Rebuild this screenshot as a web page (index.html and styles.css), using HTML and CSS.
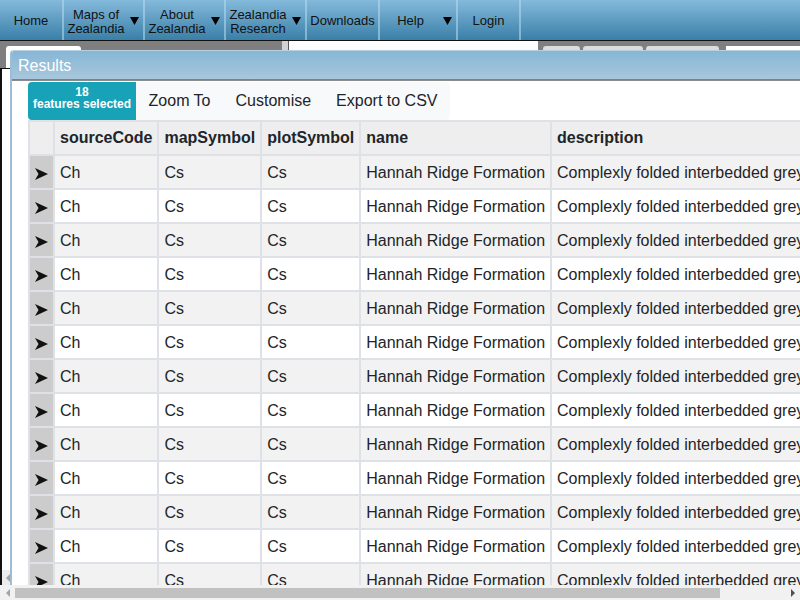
FILE: index.html
```html
<!DOCTYPE html>
<html>
<head>
<meta charset="utf-8">
<link rel="stylesheet" href="styles.css">
</head>
<body>
<div class="viewport">
<div class="page">
  <nav class="topnav">
    <div class="nav-item w-home">Home</div>
    <div class="nav-item dd w-79"><span class="label two">Maps of<br>Zealandia</span><span class="caret"><svg width="9" height="8" viewBox="0 0 9 8"><polygon points="0,0 9,0 4.5,8" fill="#000"/></svg></span></div>
    <div class="nav-item dd w-79"><span class="label two">About<br>Zealandia</span><span class="caret"><svg width="9" height="8" viewBox="0 0 9 8"><polygon points="0,0 9,0 4.5,8" fill="#000"/></svg></span></div>
    <div class="nav-item dd w-79"><span class="label two">Zealandia<br>Research</span><span class="caret"><svg width="9" height="8" viewBox="0 0 9 8"><polygon points="0,0 9,0 4.5,8" fill="#000"/></svg></span></div>
    <div class="nav-item w-dl">Downloads</div>
    <div class="nav-item dd w-help"><span class="label">Help</span><span class="caret"><svg width="9" height="8" viewBox="0 0 9 8"><polygon points="0,0 9,0 4.5,8" fill="#000"/></svg></span></div>
    <div class="nav-item w-login">Login</div>
  </nav>
  <div class="toolstrip">
    <div class="strip-tab"></div>
    <div class="strip-grip"></div>
    <div class="strip-search"></div>
    <div class="strip-btn sb1"></div>
    <div class="strip-btn sb2"></div>
    <div class="strip-btn sb3"></div>
    <div class="strip-field"></div>
  </div>
  <div class="workspace">
    <div class="ws-scroll"><svg width="4" height="8" viewBox="0 0 4 8"><polygon points="4,0 4,8 0,4" fill="#a3a3a3"/></svg></div>
  </div>

  <section class="results">
    <div class="results-title">Results</div>
    <div class="results-body">
      <div class="toolbar">
        <div class="badge"><div>18</div><div>features selected</div></div>
        <div class="tb-btn">Zoom To</div>
        <div class="tb-btn">Customise</div>
        <div class="tb-btn last">Export to CSV</div>
      </div>
      <table class="grid">
        <thead>
          <tr><th class="sel"></th><th class="c-src">sourceCode</th><th class="c-map">mapSymbol</th><th class="c-plot">plotSymbol</th><th>name</th><th>description</th></tr>
        </thead>
        <tbody>
          <tr><td class="sel"><svg class="arrow" width="13" height="12" viewBox="0 0 13 12"><polygon points="0,0 13,6 0,12 3.5,6" fill="#111"/></svg></td><td>Ch</td><td>Cs</td><td>Cs</td><td>Hannah Ridge Formation</td><td>Complexly folded interbedded greywacke and argillite</td></tr>
          <tr><td class="sel"><svg class="arrow" width="13" height="12" viewBox="0 0 13 12"><polygon points="0,0 13,6 0,12 3.5,6" fill="#111"/></svg></td><td>Ch</td><td>Cs</td><td>Cs</td><td>Hannah Ridge Formation</td><td>Complexly folded interbedded greywacke and argillite</td></tr>
          <tr><td class="sel"><svg class="arrow" width="13" height="12" viewBox="0 0 13 12"><polygon points="0,0 13,6 0,12 3.5,6" fill="#111"/></svg></td><td>Ch</td><td>Cs</td><td>Cs</td><td>Hannah Ridge Formation</td><td>Complexly folded interbedded greywacke and argillite</td></tr>
          <tr><td class="sel"><svg class="arrow" width="13" height="12" viewBox="0 0 13 12"><polygon points="0,0 13,6 0,12 3.5,6" fill="#111"/></svg></td><td>Ch</td><td>Cs</td><td>Cs</td><td>Hannah Ridge Formation</td><td>Complexly folded interbedded greywacke and argillite</td></tr>
          <tr><td class="sel"><svg class="arrow" width="13" height="12" viewBox="0 0 13 12"><polygon points="0,0 13,6 0,12 3.5,6" fill="#111"/></svg></td><td>Ch</td><td>Cs</td><td>Cs</td><td>Hannah Ridge Formation</td><td>Complexly folded interbedded greywacke and argillite</td></tr>
          <tr><td class="sel"><svg class="arrow" width="13" height="12" viewBox="0 0 13 12"><polygon points="0,0 13,6 0,12 3.5,6" fill="#111"/></svg></td><td>Ch</td><td>Cs</td><td>Cs</td><td>Hannah Ridge Formation</td><td>Complexly folded interbedded greywacke and argillite</td></tr>
          <tr><td class="sel"><svg class="arrow" width="13" height="12" viewBox="0 0 13 12"><polygon points="0,0 13,6 0,12 3.5,6" fill="#111"/></svg></td><td>Ch</td><td>Cs</td><td>Cs</td><td>Hannah Ridge Formation</td><td>Complexly folded interbedded greywacke and argillite</td></tr>
          <tr><td class="sel"><svg class="arrow" width="13" height="12" viewBox="0 0 13 12"><polygon points="0,0 13,6 0,12 3.5,6" fill="#111"/></svg></td><td>Ch</td><td>Cs</td><td>Cs</td><td>Hannah Ridge Formation</td><td>Complexly folded interbedded greywacke and argillite</td></tr>
          <tr><td class="sel"><svg class="arrow" width="13" height="12" viewBox="0 0 13 12"><polygon points="0,0 13,6 0,12 3.5,6" fill="#111"/></svg></td><td>Ch</td><td>Cs</td><td>Cs</td><td>Hannah Ridge Formation</td><td>Complexly folded interbedded greywacke and argillite</td></tr>
          <tr><td class="sel"><svg class="arrow" width="13" height="12" viewBox="0 0 13 12"><polygon points="0,0 13,6 0,12 3.5,6" fill="#111"/></svg></td><td>Ch</td><td>Cs</td><td>Cs</td><td>Hannah Ridge Formation</td><td>Complexly folded interbedded greywacke and argillite</td></tr>
          <tr><td class="sel"><svg class="arrow" width="13" height="12" viewBox="0 0 13 12"><polygon points="0,0 13,6 0,12 3.5,6" fill="#111"/></svg></td><td>Ch</td><td>Cs</td><td>Cs</td><td>Hannah Ridge Formation</td><td>Complexly folded interbedded greywacke and argillite</td></tr>
          <tr><td class="sel"><svg class="arrow" width="13" height="12" viewBox="0 0 13 12"><polygon points="0,0 13,6 0,12 3.5,6" fill="#111"/></svg></td><td>Ch</td><td>Cs</td><td>Cs</td><td>Hannah Ridge Formation</td><td>Complexly folded interbedded greywacke and argillite</td></tr>
          <tr><td class="sel"><svg class="arrow" width="13" height="12" viewBox="0 0 13 12"><polygon points="0,0 13,6 0,12 3.5,6" fill="#111"/></svg></td><td>Ch</td><td>Cs</td><td>Cs</td><td>Hannah Ridge Formation</td><td>Complexly folded interbedded greywacke and argillite</td></tr>
          <tr><td class="sel"><svg class="arrow" width="13" height="12" viewBox="0 0 13 12"><polygon points="0,0 13,6 0,12 3.5,6" fill="#111"/></svg></td><td>Ch</td><td>Cs</td><td>Cs</td><td>Hannah Ridge Formation</td><td>Complexly folded interbedded greywacke and argillite</td></tr>
        </tbody>
      </table>
    </div>
  </section>
</div>
<div class="hscroll">
  <div class="sb-arrow"><svg width="4" height="8" viewBox="0 0 4 8"><polygon points="4,0 4,8 0,4" fill="#a3a3a3"/></svg></div>
  <div class="sb-track"><div class="sb-thumb"></div></div>
  <div class="sb-arrow"><svg width="4" height="8" viewBox="0 0 4 8"><polygon points="0,0 4,4 0,8" fill="#505050"/></svg></div>
</div>
</div>
</body>
</html>
```
FILE: styles.css
```css
html, body {
  margin: 0;
  padding: 0;
}
body {
  font-family: "Liberation Sans", Arial, sans-serif;
  color: #212529;
  overflow: hidden;
}
.viewport {
  width: 800px;
  height: 600px;
  overflow: hidden;
}
.page {
  position: relative;
  width: 800px;
  height: 585px;
  overflow: hidden;
  background: #fff;
}

/* top navigation */
.topnav {
  display: flex;
  height: 40px;
  background: linear-gradient(#84badb, #3a7fa8);
  border-bottom: 1px solid #111;
  font-size: 13px;
  color: #111;
}
.nav-item {
  display: flex;
  align-items: center;
  justify-content: center;
  text-align: center;
  line-height: 14px;
  padding-top: 1px;
  border-right: 2px solid rgba(185, 218, 238, 0.55);
  box-sizing: border-box;
  flex-shrink: 0;
}
.nav-item.dd {
  justify-content: flex-start;
}
.nav-item .label {
  flex: 1;
  text-align: center;
}
.nav-item .label.two {
  padding-top: 2px;
}
.nav-item .caret {
  width: 15px;
  display: flex;
  justify-content: center;
  padding-right: 2px;
  box-sizing: border-box;
}
.nav-item .caret svg {
  display: block;
}
.w-home { width: 64px; }
.w-79 { width: 81px; }
.w-dl { width: 73px; }
.w-help { width: 78px; }
.w-login { width: 63px; }

/* underlying app strip */
.toolstrip {
  display: flex;
  align-items: flex-start;
  height: 27px;
  background: #7f7f7f;
  overflow: hidden;
}
.toolstrip > div {
  flex-shrink: 0;
}
.strip-tab {
  margin: 5px 0 0 6px;
  width: 75px;
  height: 30px;
  background: #fff;
  border-radius: 3px;
}
.strip-grip {
  margin-left: 201px;
  width: 6px;
  height: 27px;
  background: #d2d2d2;
}
.strip-search {
  width: 249px;
  height: 27px;
  background: linear-gradient(#ffffff, #eef4fa);
  border-left: 1px solid #555;
}
.strip-btn {
  margin-top: 5px;
  height: 30px;
  background: #dcdcdc;
  border-radius: 3px;
}
.sb1 { margin-left: 5px; width: 37px; }
.sb2 { margin-left: 3px; width: 60px; }
.sb3 { margin-left: 3px; width: 73px; }
.strip-field {
  margin: 5px 0 0 7px;
  width: 80px;
  height: 30px;
  background: #fff;
}
.workspace {
  height: 516px;
  background: #fff;
  border-top: 1px solid #111;
  border-left: 2px solid #111;
  display: flex;
  flex-direction: column;
  justify-content: flex-end;
}
.ws-scroll {
  height: 15px;
  background: #ececec;
  display: flex;
  align-items: center;
  padding-left: 4px;
}

/* results window */
.results {
  position: absolute;
  left: 10px;
  top: 50px;
  right: -74px;
  bottom: 0;
  background: #fff;
  border-left: 2px solid #9dbdd6;
  border-top: 1px solid #b7d0e2;
  border-top-left-radius: 4px;
  display: flex;
  flex-direction: column;
  overflow: hidden;
}
.results-title {
  height: 27px;
  line-height: 28px;
  padding: 1px 0 0 6px;
  font-size: 16px;
  color: #fff;
  background: linear-gradient(#86b6d6, #a8c7db);
  border-bottom: 1px solid #5b8cb0;
}
.results-body {
  flex: 1;
  border-top: 1px solid #8c8c8c;
  padding: 1px 0 0 16px;
  overflow: hidden;
}
.toolbar {
  display: flex;
  width: max-content;
  height: 38px;
}
.badge {
  background: #17a2b8;
  color: #fff;
  font-size: 12px;
  font-weight: bold;
  line-height: 12px;
  padding: 4px 5px 0;
  text-align: center;
  border-radius: 4px 0 0 4px;
}
.tb-btn {
  background: #f8f9fa;
  font-size: 16px;
  line-height: 38px;
  padding: 0 12.5px;
  color: #212529;
}
.tb-btn.last {
  border-radius: 0 4px 4px 0;
}

.grid {
  border-collapse: separate;
  border-spacing: 2px;
  background: #dee2e6;
  font-size: 16px;
}
.grid th, .grid td {
  padding: 4px 5px;
  line-height: 24px;
  white-space: nowrap;
  text-align: left;
  color: #212529;
}
.grid td {
  padding-top: 5px;
  padding-bottom: 3px;
}
.grid thead th {
  background: #eeeeee;
  font-weight: bold;
}
.grid th.sel {
  width: 14px;
}
.grid th.c-map {
  width: 91px;
}
.grid th.c-plot {
  width: 89px;
}
.grid tbody tr:nth-child(odd) td {
  background: #f2f2f2;
}
.grid tbody tr:nth-child(even) td {
  background: #fff;
}
.grid tbody tr td.sel {
  background: #cccccc;
  text-align: center;
}
.arrow {
  display: inline-block;
  vertical-align: middle;
}

/* page horizontal scrollbar */
.hscroll {
  display: flex;
  height: 15px;
  background: #f1f1f1;
}
.sb-arrow {
  width: 15px;
  height: 15px;
  display: flex;
  align-items: center;
  justify-content: center;
}
.sb-track {
  flex: 1;
  display: flex;
  align-items: center;
}
.sb-thumb {
  width: 705px;
  height: 10px;
  background: #c1c1c1;
}
```
